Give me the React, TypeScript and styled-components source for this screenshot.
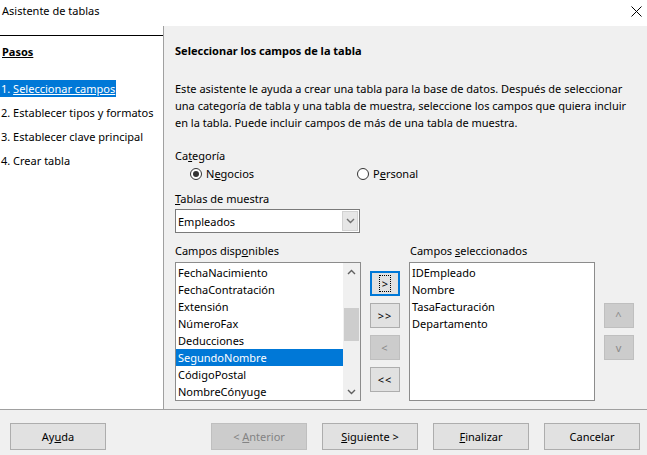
import React from 'react';
import styled, { createGlobalStyle, css } from 'styled-components';

const Global = createGlobalStyle`
  html, body { margin: 0; padding: 0; background: #f0f0f0; }
  body {
    font-family: "Noto Sans", "Segoe UI", sans-serif;
    font-size: 11px;
    line-height: 17px;
    color: #000;
  }
  * { box-sizing: border-box; }
`;

const Window = styled.div`
  width: 647px;
  height: 455px;
  display: flex;
  flex-direction: column;
  background: #f0f0f0;
  overflow: hidden;
`;

const TitleBar = styled.div`
  height: 26px;
  flex: none;
  background: #fff;
  display: flex;
  align-items: flex-start;
  justify-content: space-between;
  padding: 2px 5px 0 2px;
`;

const Title = styled.span``;

const CloseIcon = styled.svg`
  width: 11px;
  height: 11px;
  margin-top: 4px;
`;

const Main = styled.div`
  flex: 1;
  display: flex;
  min-height: 0;
`;

const Sidebar = styled.div`
  width: 163px;
  flex: none;
  background: #fff;
  padding-top: 9px;
`;

const StepsBox = styled.div`
  border-top: 1px solid #000;
  padding-top: 7px;
`;

const StepsTitle = styled.div`
  font-weight: bold;
  text-decoration: underline;
  padding-left: 2px;
  margin-bottom: 20px;
`;

const StepList = styled.div`
  display: flex;
  flex-direction: column;
  gap: 7px;
`;

const Step = styled.div<{ $active?: boolean }>`
  height: 17px;
  white-space: nowrap;
  span {
    display: inline-block;
    padding: 0 1px 0 1px;
    ${(p) =>
      p.$active &&
      css`
        background: #0078d7;
        color: #fff;
      `}
  }
`;

const Content = styled.div`
  flex: 1;
  border-left: 1px solid #a0a0a0;
  padding: 16px 0 0 11px;
  display: flex;
  flex-direction: column;
`;

const Heading = styled.div`
  font-weight: bold;
`;

const Paragraph = styled.p`
  margin: 21px 0 0 0;
  white-space: nowrap;
`;

const Label = styled.div<{ $mt?: number }>`
  margin-top: ${(p) => p.$mt ?? 0}px;
`;

const RadioRow = styled.div`
  margin-top: 1px;
  padding-left: 15px;
  display: grid;
  grid-template-columns: 167px auto;
  height: 17px;
`;

const RadioOption = styled.label`
  display: flex;
  align-items: center;
  gap: 4px;
`;

const RadioCircle = styled.span<{ $checked?: boolean }>`
  width: 12px;
  height: 12px;
  border-radius: 50%;
  border: 1px solid #333;
  background: #fff;
  display: inline-flex;
  align-items: center;
  justify-content: center;
  &::after {
    content: '';
    width: 6px;
    height: 6px;
    border-radius: 50%;
    background: ${(p) => (p.$checked ? '#333' : 'transparent')};
  }
`;

const Select = styled.div`
  margin-top: 2px;
  width: 185px;
  height: 24px;
  background: #fff;
  border: 1px solid #7a7a7a;
  display: flex;
  align-items: center;
  justify-content: space-between;
  padding: 0 1px 0 2px;
`;

const SelectArrow = styled.span`
  width: 16px;
  height: 20px;
  background: #e6e6e6;
  border: 1px solid #d2d2d2;
  display: flex;
  align-items: center;
  justify-content: center;
`;

const FieldsGrid = styled.div`
  margin-top: 9px;
  display: grid;
  grid-template-columns: 186px 30px 186px 30px;
  grid-template-rows: 17px 139px;
  column-gap: 9px;
  row-gap: 3px;
`;

const GridLabel = styled.div<{ $col: number }>`
  grid-column: ${(p) => p.$col};
  grid-row: 1;
  padding-left: ${(p) => (p.$col === 3 ? 1 : 0)}px;
`;

const ListBox = styled.div<{ $col: number }>`
  grid-row: 2;
  grid-column: ${(p) => p.$col};
  background: #fff;
  border: 1px solid #8c8c8c;
  display: flex;
  overflow: hidden;
`;

const ListItems = styled.div`
  flex: 1;
  padding-top: 1px;
  display: flex;
  flex-direction: column;
`;

const ListItem = styled.div<{ $selected?: boolean }>`
  height: 17px;
  flex: none;
  padding-left: 2px;
  white-space: nowrap;
  ${(p) =>
    p.$selected &&
    css`
      background: #0078d7;
      color: #fff;
    `}
`;

const ScrollBar = styled.div`
  width: 17px;
  flex: none;
  background: #f0f0f0;
  display: flex;
  flex-direction: column;
`;

const ScrollArrow = styled.div`
  height: 17px;
  display: flex;
  align-items: center;
  justify-content: center;
`;

const ScrollTrack = styled.div`
  flex: 1;
  padding: 28px 1px 0 1px;
`;

const ScrollThumb = styled.div`
  height: 33px;
  background: #cdcdcd;
`;

const ButtonColumn = styled.div<{ $top: number; $col: number }>`
  grid-row: 2;
  grid-column: ${(p) => p.$col};
  padding-top: ${(p) => p.$top}px;
  display: flex;
  flex-direction: column;
  gap: 7px;
`;

const SmallButton = styled.div<{ $disabled?: boolean; $focused?: boolean }>`
  width: 30px;
  height: 25px;
  flex: none;
  background: #e1e1e1;
  border: 1px solid #adadad;
  display: flex;
  align-items: center;
  justify-content: center;
  font-size: 11px;
  letter-spacing: 1px;
  ${(p) =>
    p.$disabled &&
    css`
      background: #cccccc;
      border-color: #bfbfbf;
      color: #8a8a8a;
    `}
  ${(p) =>
    p.$focused &&
    css`
      border: 2px solid #0078d7;
    `}
`;

const FocusRing = styled.span`
  border: 1px dotted #000;
  padding: 0 1px 0 2px;
  line-height: 16px;
  height: 17px;
  display: inline-flex;
  align-items: center;
`;

const Footer = styled.div`
  height: 46px;
  flex: none;
  border-top: 1px solid #a0a0a0;
  display: flex;
  align-items: flex-start;
  padding: 13px 7px 0 10px;
`;

const ButtonGroup = styled.div`
  margin-left: auto;
  display: flex;
  gap: 15px;
`;

const Button = styled.div<{ $disabled?: boolean }>`
  width: 96px;
  height: 27px;
  flex: none;
  background: #e1e1e1;
  border: 1px solid #adadad;
  display: flex;
  align-items: center;
  justify-content: center;
  white-space: nowrap;
  ${(p) =>
    p.$disabled &&
    css`
      background: #cccccc;
      border-color: #bfbfbf;
      color: #838383;
    `}
`;

const Chevron = ({ up, color = '#606060' }: { up?: boolean; color?: string }) => (
  <svg width="9" height="6" viewBox="0 0 9 6">
    <path
      d={up ? 'M1 5 L4.5 1.5 L8 5' : 'M1 1 L4.5 4.5 L8 1'}
      fill="none"
      stroke={color}
      strokeWidth="1.4"
    />
  </svg>
);

const available = [
  'FechaNacimiento',
  'FechaContratación',
  'Extensión',
  'NúmeroFax',
  'Deducciones',
  'SegundoNombre',
  'CódigoPostal',
  'NombreCónyuge',
];

const selected = ['IDEmpleado', 'Nombre', 'TasaFacturación', 'Departamento'];

export default function App() {
  return (
    <>
      <Global />
      <Window>
        <TitleBar>
          <Title>Asistente de tablas</Title>
          <CloseIcon viewBox="0 0 11 11">
            <path d="M0.5 0.5 L10.5 10.5 M10.5 0.5 L0.5 10.5" stroke="#000" strokeWidth="1" />
          </CloseIcon>
        </TitleBar>
        <Main>
          <Sidebar>
            <StepsBox>
              <StepsTitle>Pasos</StepsTitle>
              <StepList>
                <Step $active>
                  <span>
                    1. <u>Seleccionar campos</u>
                  </span>
                </Step>
                <Step>
                  <span>2. Establecer tipos y formatos</span>
                </Step>
                <Step>
                  <span>3. Establecer clave principal</span>
                </Step>
                <Step>
                  <span>4. Crear tabla</span>
                </Step>
              </StepList>
            </StepsBox>
          </Sidebar>
          <Content>
            <Heading>Seleccionar los campos de la tabla</Heading>
            <Paragraph>
              Este asistente le ayuda a crear una tabla para la base de datos. Después de seleccionar
              <br />
              una categoría de tabla y una tabla de muestra, seleccione los campos que quiera incluir
              <br />
              en la tabla. Puede incluir campos de más de una tabla de muestra.
            </Paragraph>
            <Label $mt={16}>
              Ca<u>t</u>egoría
            </Label>
            <RadioRow>
              <RadioOption>
                <RadioCircle $checked />
                <span>
                  N<u>e</u>gocios
                </span>
              </RadioOption>
              <RadioOption>
                <RadioCircle />
                <span>
                  P<u>e</u>rsonal
                </span>
              </RadioOption>
            </RadioRow>
            <Label $mt={8}>
              <u>T</u>ablas de muestra
            </Label>
            <Select>
              <span>Empleados</span>
              <SelectArrow>
                <Chevron color="#707070" />
              </SelectArrow>
            </Select>
            <FieldsGrid>
              <GridLabel $col={1}>
                Campos disp<u>o</u>nibles
              </GridLabel>
              <GridLabel $col={3}>
                Campos <u>s</u>eleccionados
              </GridLabel>
              <ListBox $col={1}>
                <ListItems>
                  {available.map((f) => (
                    <ListItem key={f} $selected={f === 'SegundoNombre'}>
                      {f}
                    </ListItem>
                  ))}
                </ListItems>
                <ScrollBar>
                  <ScrollArrow>
                    <Chevron up />
                  </ScrollArrow>
                  <ScrollTrack>
                    <ScrollThumb />
                  </ScrollTrack>
                  <ScrollArrow>
                    <Chevron />
                  </ScrollArrow>
                </ScrollBar>
              </ListBox>
              <ButtonColumn $col={2} $top={9}>
                <SmallButton $focused>
                  <FocusRing>&gt;</FocusRing>
                </SmallButton>
                <SmallButton>&gt;&gt;</SmallButton>
                <SmallButton $disabled>&lt;</SmallButton>
                <SmallButton>&lt;&lt;</SmallButton>
              </ButtonColumn>
              <ListBox $col={3}>
                <ListItems>
                  {selected.map((f) => (
                    <ListItem key={f}>{f}</ListItem>
                  ))}
                </ListItems>
              </ListBox>
              <ButtonColumn $col={4} $top={41}>
                <SmallButton $disabled>^</SmallButton>
                <SmallButton $disabled>v</SmallButton>
              </ButtonColumn>
            </FieldsGrid>
          </Content>
        </Main>
        <Footer>
          <Button>
            <span>
              Ay<u>u</u>da
            </span>
          </Button>
          <ButtonGroup>
            <Button $disabled>
              <span>
                &lt; <u>A</u>nterior
              </span>
            </Button>
            <Button>
              <span>
                <u>S</u>iguiente &gt;
              </span>
            </Button>
            <Button>
              <span>
                <u>F</u>inalizar
              </span>
            </Button>
            <Button>
              <span>Cancelar</span>
            </Button>
          </ButtonGroup>
        </Footer>
      </Window>
    </>
  );
}
